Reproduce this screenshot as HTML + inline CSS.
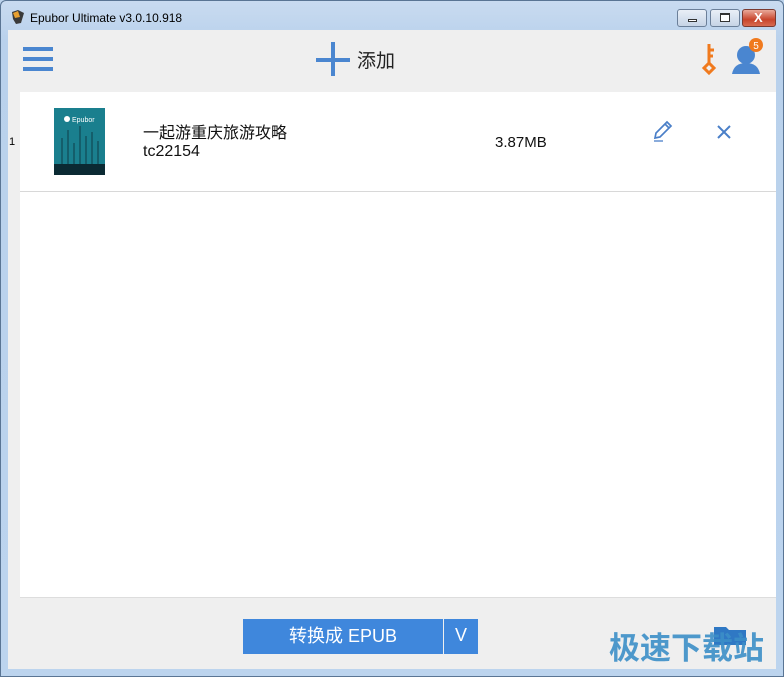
<!DOCTYPE html>
<html><head><meta charset="utf-8"><style>
*{margin:0;padding:0;box-sizing:border-box}
body{width:784px;height:677px;overflow:hidden;background:#bcd3ec;font-family:"Liberation Sans","Noto Sans CJK SC",sans-serif;position:relative}
.frame{position:absolute;left:0;top:0;width:784px;height:677px;background:linear-gradient(#c9dbf0,#b9d1ec 40px,#bcd4ee);border:1px solid #5a7594;border-radius:6px 6px 0 0}
.title{position:absolute;left:30px;top:11px;font-size:12px;color:#000}
.wb{position:absolute;top:9px;height:18px;border:1px solid #6b7f99;border-radius:3px;background:linear-gradient(#e9eff7,#c6d4e6)}
.content{position:absolute;left:8px;top:30px;width:768px;height:639px;background:#efefef}
.list{position:absolute;left:20px;top:92px;width:756px;height:506px;background:#fff;border-bottom:1px solid #ddd}
.abs{position:absolute}
</style></head><body>
<div class="frame"></div>
<svg class="abs" style="left:10px;top:9px" width="16" height="16"><path d="M2 3 L8 1 L14 4 L11 14 L6 15 L3 10Z" fill="#3a3a3a"/><path d="M3 4 L8 2 L10 8 L5 9Z" fill="#e8a030"/></svg>
<div class="title">Epubor Ultimate v3.0.10.918</div>
<div class="wb" style="left:677px;width:30px"><div class="abs" style="left:10px;top:9px;width:9px;height:3px;border:1px solid #333;background:#fff"></div></div>
<div class="wb" style="left:710px;width:30px"><div class="abs" style="left:9px;top:3px;width:10px;height:9px;border:1px solid #333;border-top-width:2px;background:#fff"></div></div>
<div class="wb" style="left:742px;width:34px;background:linear-gradient(#e9a99a,#c8452c 60%,#d86a50);border-color:#7a3a30"><div class="abs" style="left:11px;top:0;color:#fff;font-weight:bold;font-size:13px">X</div></div>
<div class="content"></div>
<div class="abs" style="left:23px;top:47px;width:30px;height:4px;background:#4a86d0"></div>
<div class="abs" style="left:23px;top:57px;width:30px;height:4px;background:#4a86d0"></div>
<div class="abs" style="left:23px;top:67px;width:30px;height:4px;background:#4a86d0"></div>
<div class="abs" style="left:316px;top:58px;width:34px;height:4px;background:#4a86d0"></div>
<div class="abs" style="left:331px;top:42px;width:4px;height:34px;background:#4a86d0"></div>
<div class="abs" style="left:357px;top:46px;font-size:19px;color:#222">添加</div>
<svg class="abs" style="left:699px;top:42px" width="22" height="34"><path d="M10 2 V22 M10 8 H15 M10 14 H14" stroke="#f07a1e" stroke-width="3" fill="none"/><path d="M10 21 L15 26 L10 31 L5 26Z" stroke="#f07a1e" stroke-width="3" fill="none"/></svg>
<svg class="abs" style="left:730px;top:38px" width="36" height="38"><circle cx="16" cy="17" r="9" fill="#4a86d0"/><path d="M2 36 Q4 25 16 25 Q28 25 30 36Z" fill="#4a86d0"/><circle cx="26" cy="7" r="7" fill="#f07a1e"/><text x="26" y="11" font-size="10" fill="#fff" text-anchor="middle" font-family="Liberation Sans">5</text></svg>
<div class="list"></div>
<div class="abs" style="left:20px;top:191px;width:756px;height:1px;background:#d8d8d8"></div>
<div class="abs" style="left:9px;top:136px;font-size:11px">1</div>
<svg class="abs" style="left:54px;top:108px" width="51" height="67"><rect width="51" height="67" fill="#1a7f8e"/><rect y="56" width="51" height="11" fill="#0b2a33"/><g stroke="#0d3c48" stroke-width="1"><path d="M8 56V30M14 56V22M20 56V35M26 56V18M32 56V28M38 56V24M44 56V33"/></g><text x="18" y="14" font-size="7" fill="#fff" font-family="Liberation Sans">Epubor</text><circle cx="13" cy="11" r="3" fill="#fff"/></svg>
<div class="abs" style="left:143px;top:125px;font-size:16px;line-height:18px;color:#111">一起游重庆旅游攻略</div>
<div class="abs" style="left:143px;top:143px;font-size:16px;line-height:18px;color:#111">tc22154</div>
<div class="abs" style="left:495px;top:134px;font-size:15px;color:#111">3.87MB</div>
<svg class="abs" style="left:651px;top:120px" width="24" height="24"><path d="M4 18 L5 13 L16 2 L20 6 L9 17Z M14 4 L18 8" stroke="#4a7fc8" stroke-width="1.7" fill="none"/><path d="M3 21 H12" stroke="#4a7fc8" stroke-width="1.3"/></svg>
<svg class="abs" style="left:716px;top:124px" width="16" height="16"><path d="M2 2L14 14M14 2L2 14" stroke="#4a7fc8" stroke-width="2"/></svg>
<div class="abs" style="left:243px;top:619px;width:200px;height:35px;background:#3f87dc;color:#fff;font-size:18px;text-align:center;line-height:35px">转换成 EPUB</div>
<div class="abs" style="left:444px;top:619px;width:34px;height:35px;background:#3f87dc;color:#fff;font-size:18px;text-align:center;line-height:33px">V</div>
<svg class="abs" style="left:712px;top:623px" width="36" height="24"><path d="M2 4 H14 L17 7 H34 V22 H2Z" fill="#2f78c4"/></svg>
<div class="abs" style="left:609px;top:629px;font-size:31px;line-height:40px;color:#3c8fc8;font-weight:bold;letter-spacing:0;opacity:.9">极速下载站</div>
</body></html>
